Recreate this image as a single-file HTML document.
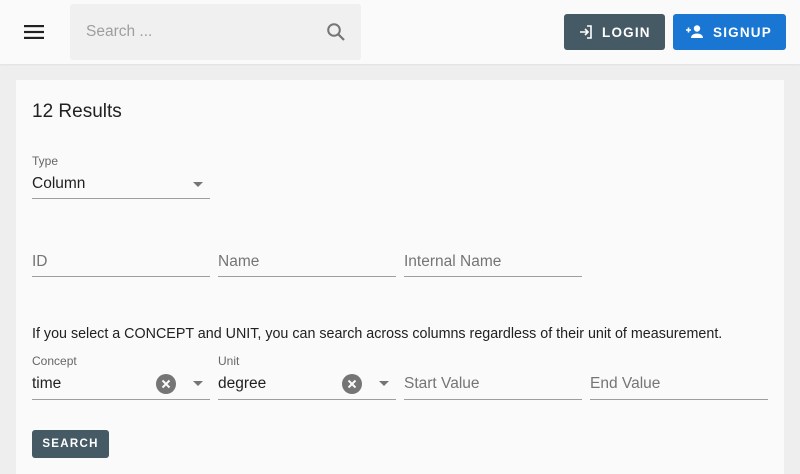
<!DOCTYPE html>
<html><head><meta charset="utf-8"><style>
*{margin:0;padding:0;box-sizing:border-box}
body{width:800px;height:474px;background:#eeeeee;font-family:"Liberation Sans",sans-serif;position:relative;overflow:hidden;color:#212121}
.hdr{position:absolute;left:0;top:0;width:800px;height:64px;background:#fafafa;box-shadow:0 1px 2px rgba(0,0,0,0.06)}
.abs{position:absolute}
.search{left:70px;top:4px;width:291px;height:56px;background:#f0f0f0;border-radius:3px}
.btn{position:absolute;height:36px;border-radius:3px;color:#fff;font-size:13.5px;letter-spacing:1.2px;font-weight:600;display:flex;align-items:center}
.card{position:absolute;left:16px;top:80px;width:768px;height:394px;background:#fafafa}
.lbl{position:absolute;font-size:12px;color:#666}
.val{position:absolute;font-size:15.5px;color:#212121}
.ph{position:absolute;font-size:15.5px;color:#757575}
.line{position:absolute;height:1px;background:#9e9e9e}
.clr{position:absolute;width:20px;height:20px;border-radius:50%;background:#757575}
.arr{position:absolute;width:0;height:0;border-left:5px solid transparent;border-right:5px solid transparent;border-top:5px solid #757575}
</style></head><body>
<div class="hdr">
<svg class="abs" style="left:24px;top:24px" width="20" height="16"><rect x="0" y="1" width="20" height="2.2" fill="#212121"/><rect x="0" y="6.9" width="20" height="2.2" fill="#212121"/><rect x="0" y="12.8" width="20" height="2.2" fill="#212121"/></svg>
<div class="abs search"><span class="abs" style="left:16px;top:19px;font-size:15.5px;color:#9e9e9e">Search ...</span>
<svg class="abs" style="left:256px;top:18px" width="20" height="20"><circle cx="8" cy="8" r="5.8" stroke="#757575" stroke-width="2" fill="none"/><line x1="12.2" y1="12.2" x2="18" y2="18" stroke="#757575" stroke-width="2.2"/></svg></div>
<div class="btn" style="left:564px;top:14px;width:101px;background:#455a64"><svg style="margin-left:13px" width="16" height="16"><path d="M3 8h8M8 5l3 3-3 3" stroke="#fff" stroke-width="1.6" fill="none"/><path d="M10 2h4v12h-4" stroke="#fff" stroke-width="1.6" fill="none"/></svg><span style="margin-left:9px">LOGIN</span></div>
<div class="btn" style="left:673px;top:14px;width:113px;background:#1976d2"><svg style="margin-left:12px" width="20" height="16"><path d="M1 6h5M3.5 3.5v5" stroke="#fff" stroke-width="1.6"/><circle cx="12" cy="4.5" r="3.2" fill="#fff"/><path d="M6 14c0-3 3-4.5 6-4.5s6 1.5 6 4.5z" fill="#fff"/></svg><span style="margin-left:8px">SIGNUP</span></div>
</div>
<div class="card">
<div class="abs" style="left:16px;top:21px;font-size:19px;color:#212121">12 Results</div>
<div class="lbl" style="left:16px;top:74px">Type</div>
<div class="val" style="left:16px;top:95px">Column</div>
<div class="arr" style="left:177px;top:102px"></div>
<div class="line" style="left:16px;top:118px;width:178px"></div>
<div class="ph" style="left:16px;top:173px">ID</div><div class="line" style="left:16px;top:196px;width:178px"></div>
<div class="ph" style="left:202px;top:173px">Name</div><div class="line" style="left:202px;top:196px;width:178px"></div>
<div class="ph" style="left:388px;top:173px">Internal Name</div><div class="line" style="left:388px;top:196px;width:178px"></div>
<div class="abs" style="left:16px;top:246px;font-size:14.3px;color:#212121">If you select a CONCEPT and UNIT, you can search across columns regardless of their unit of measurement.</div>
<div class="lbl" style="left:16px;top:274px">Concept</div>
<div class="val" style="left:16px;top:295px">time</div>
<div class="clr" style="left:140px;top:294px"><svg width="20" height="20"><path d="M6.5 6.5l7 7M13.5 6.5l-7 7" stroke="#fafafa" stroke-width="2"/></svg></div>
<div class="arr" style="left:177px;top:301px"></div>
<div class="line" style="left:16px;top:319px;width:178px"></div>
<div class="lbl" style="left:202px;top:274px">Unit</div>
<div class="val" style="left:202px;top:295px">degree</div>
<div class="clr" style="left:326px;top:294px"><svg width="20" height="20"><path d="M6.5 6.5l7 7M13.5 6.5l-7 7" stroke="#fafafa" stroke-width="2"/></svg></div>
<div class="arr" style="left:363px;top:301px"></div>
<div class="line" style="left:202px;top:319px;width:178px"></div>
<div class="ph" style="left:388px;top:295px">Start Value</div><div class="line" style="left:388px;top:319px;width:178px"></div>
<div class="ph" style="left:574px;top:295px">End Value</div><div class="line" style="left:574px;top:319px;width:178px"></div>
<div class="btn" style="left:16px;top:350px;width:77px;height:28px;background:#455a64;font-size:11.5px;justify-content:center;letter-spacing:1.3px">SEARCH</div>
</div>
</body></html>
